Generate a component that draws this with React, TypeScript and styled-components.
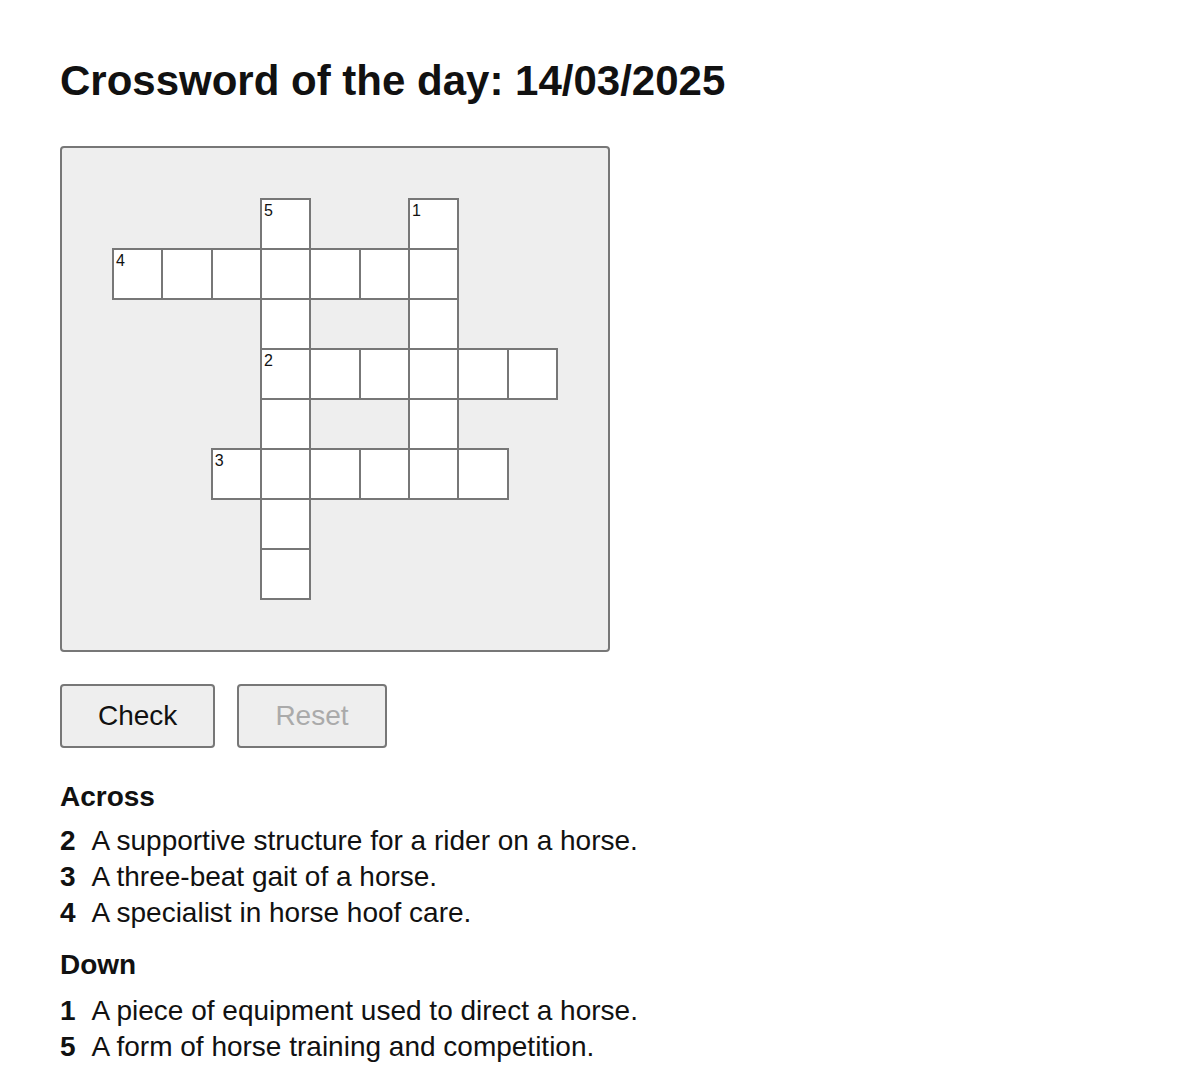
import React from "react";
import styled, { createGlobalStyle } from "styled-components";

const GlobalStyle = createGlobalStyle`
  html, body {
    margin: 0;
    padding: 0;
    background: #ffffff;
  }
  body {
    font-family: "Liberation Sans", Arial, Helvetica, sans-serif;
    color: #111111;
  }
  * { box-sizing: border-box; }
`;

const Page = styled.main`
  padding: 57px 60px 20px;
`;

const Title = styled.h1`
  margin: 0 0 41px;
  font-size: 42px;
  font-weight: 700;
  line-height: 48px;
  color: #111;
`;

const Board = styled.div`
  width: 550px;
  border: 2px solid #777;
  border-radius: 4px;
  background: #eeeeee;
  padding: 51px;
`;

const Grid = styled.div`
  display: grid;
  grid-template-columns: repeat(9, 1fr);
  grid-auto-rows: 50px;
`;

const Cell = styled.div<{ $filled: boolean }>`
  position: relative;
  background: ${(p) => (p.$filled ? "#ffffff" : "transparent")};
  border: ${(p) => (p.$filled ? "1px solid #777" : "none")};
  box-shadow: ${(p) => (p.$filled ? "0 0 0 1px #777" : "none")};
`;

const CellNumber = styled.span`
  position: absolute;
  top: 2px;
  left: 2px;
  font-size: 16px;
  line-height: 18px;
  color: #111;
`;

const ButtonRow = styled.div`
  display: flex;
  gap: 22px;
  margin-top: 32px;
`;

const Button = styled.button`
  font-family: "Liberation Sans", Arial, Helvetica, sans-serif;
  font-size: 28px;
  line-height: 32px;
  padding: 14px 36px;
  border: 2px solid #777;
  border-radius: 4px;
  background: #eeeeee;
  color: #111;
  cursor: pointer;
  &:disabled {
    color: #aaaaaa;
    cursor: default;
  }
`;

const Clues = styled.section`
  margin-top: 33px;
`;

const ClueHeading = styled.h2<{ $first?: boolean }>`
  margin: ${(p) => (p.$first ? "0 0 10px" : "18px 0 12px")};
  font-size: 28px;
  line-height: 32px;
  font-weight: 700;
`;

const ClueList = styled.ul`
  list-style: none;
  margin: 0;
  padding: 0;
`;

const ClueItem = styled.li`
  display: flex;
  gap: 16px;
  font-size: 28px;
  line-height: 36px;
`;

const ClueNum = styled.b`
  font-weight: 700;
`;

type Placed = { r: number; c: number; n?: number };

const words: { r: number; c: number; len: number; dir: "a" | "d"; n: number }[] = [
  { r: 0, c: 6, len: 6, dir: "d", n: 1 },
  { r: 3, c: 3, len: 6, dir: "a", n: 2 },
  { r: 5, c: 2, len: 6, dir: "a", n: 3 },
  { r: 1, c: 0, len: 7, dir: "a", n: 4 },
  { r: 0, c: 3, len: 8, dir: "d", n: 5 },
];

const ROWS = 8;
const COLS = 9;

function buildCells() {
  const map = new Map<string, Placed>();
  for (const w of words) {
    for (let i = 0; i < w.len; i++) {
      const r = w.dir === "d" ? w.r + i : w.r;
      const c = w.dir === "a" ? w.c + i : w.c;
      const key = `${r}-${c}`;
      const existing = map.get(key) || { r, c };
      if (i === 0) existing.n = w.n;
      map.set(key, existing);
    }
  }
  return map;
}

const across = [
  { n: 2, t: "A supportive structure for a rider on a horse." },
  { n: 3, t: "A three-beat gait of a horse." },
  { n: 4, t: "A specialist in horse hoof care." },
];

const down = [
  { n: 1, t: "A piece of equipment used to direct a horse." },
  { n: 5, t: "A form of horse training and competition." },
];

export default function App() {
  const cells = buildCells();
  const items: React.ReactNode[] = [];
  for (let r = 0; r < ROWS; r++) {
    for (let c = 0; c < COLS; c++) {
      const cell = cells.get(`${r}-${c}`);
      items.push(
        <Cell key={`${r}-${c}`} $filled={!!cell}>
          {cell?.n ? <CellNumber>{cell.n}</CellNumber> : null}
        </Cell>
      );
    }
  }
  return (
    <>
      <GlobalStyle />
      <Page>
        <Title>Crossword of the day: 14/03/2025</Title>
        <Board>
          <Grid>{items}</Grid>
        </Board>
        <ButtonRow>
          <Button>Check</Button>
          <Button disabled>Reset</Button>
        </ButtonRow>
        <Clues>
          <ClueHeading $first>Across</ClueHeading>
          <ClueList>
            {across.map((c) => (
              <ClueItem key={c.n}>
                <ClueNum>{c.n}</ClueNum>
                <span>{c.t}</span>
              </ClueItem>
            ))}
          </ClueList>
          <ClueHeading>Down</ClueHeading>
          <ClueList>
            {down.map((c) => (
              <ClueItem key={c.n}>
                <ClueNum>{c.n}</ClueNum>
                <span>{c.t}</span>
              </ClueItem>
            ))}
          </ClueList>
        </Clues>
      </Page>
    </>
  );
}
